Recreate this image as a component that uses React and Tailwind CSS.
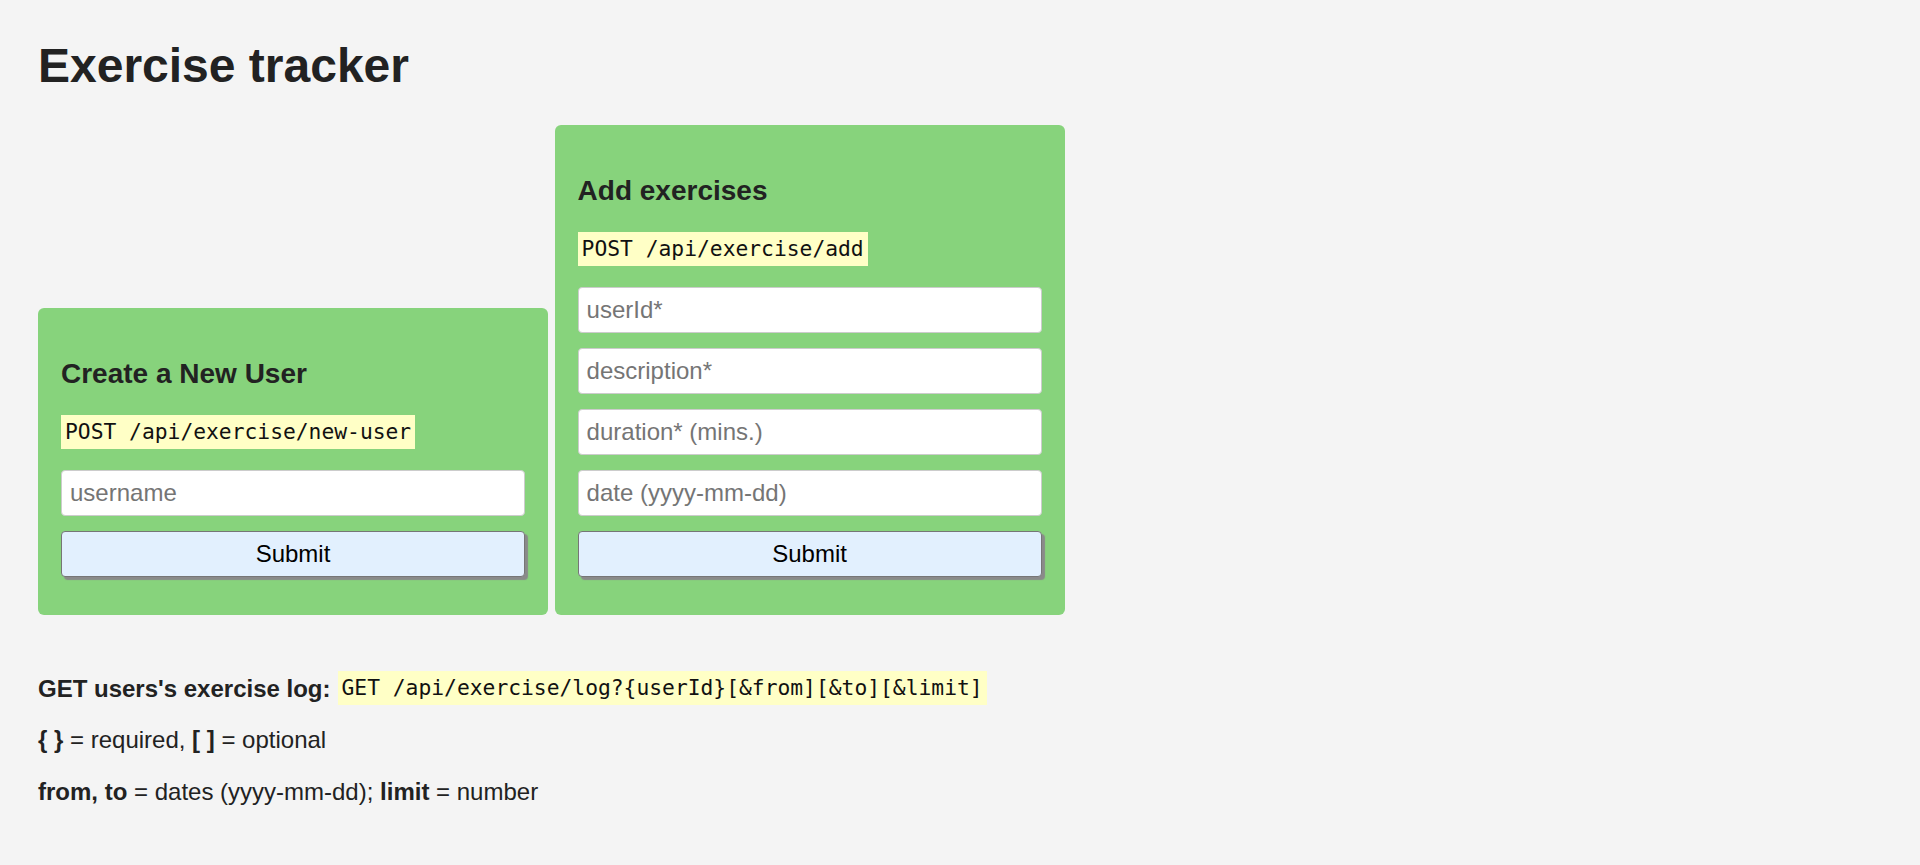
function Code({ children }) {
    return (
        <code className="inline-block bg-[#ffffc6] px-[4px] py-[3px] leading-[28px] text-[21.3px] text-[#111] font-['DejaVu_Sans_Mono','Liberation_Mono',monospace]">
            {children}
        </code>
    );
}

function Field({ placeholder }) {
    return (
        <input
            type="text"
            placeholder={placeholder}
            className="block w-full mb-[15.4px] px-2 py-2 text-[24px] leading-[27.6px] bg-white border border-[#ccc] rounded-[4px] text-[#222] placeholder:text-[#757575] outline-none"
        />
    );
}

function SubmitButton() {
    return (
        <button
            type="button"
            className="block w-full px-2 py-2 text-[24px] leading-[27.6px] text-black bg-[#e2f0fe] border border-[#767676] rounded-[4px] shadow-[3px_3px_1px_#8a8a8a]"
        >
            Submit
        </button>
    );
}

function Card({ title, endpoint, fields }) {
    return (
        <form className="w-[510px] bg-[#87d37c] rounded-[6px] pt-[22px] pb-[38px] px-[23px]">
            <h3 className="mt-[28px] mb-[25px] text-[28px] leading-[32px] font-bold">{title}</h3>
            <div className="mb-[21px]">
                <Code>{endpoint}</Code>
            </div>
            {fields.map((f) => (
                <Field key={f} placeholder={f} />
            ))}
            <SubmitButton />
        </form>
    );
}

export default function App() {
    return (
        <main className="min-h-screen bg-[#f4f4f4] text-[#222] pl-[38px] pt-[38px] pb-10 font-['Liberation_Sans',Arial,sans-serif] text-[24px] leading-[27.6px]">
            <h1 className="text-[48px] leading-[55px] font-bold mb-[32px]">Exercise tracker</h1>

            <div className="flex items-end gap-[6.6px]">
                <Card
                    title="Create a New User"
                    endpoint="POST /api/exercise/new-user"
                    fields={["username"]}
                />
                <Card
                    title="Add exercises"
                    endpoint="POST /api/exercise/add"
                    fields={["userId*", "description*", "duration* (mins.)", "date (yyyy-mm-dd)"]}
                />
            </div>

            <div className="mt-[60px] flex flex-col gap-[24px]">
                <p className="flex items-center h-[27.6px]">
                    <b className="mr-[7px]">GET users's exercise log:</b>
                    <Code>GET /api/exercise/log?{"{userId}"}[&amp;from][&amp;to][&amp;limit]</Code>
                </p>
                <p>
                    <b>{"{ }"}</b> = required, <b>[ ]</b> = optional
                </p>
                <p>
                    <b>from, to</b> = dates (yyyy-mm-dd); <b>limit</b> = number
                </p>
            </div>
        </main>
    );
}
